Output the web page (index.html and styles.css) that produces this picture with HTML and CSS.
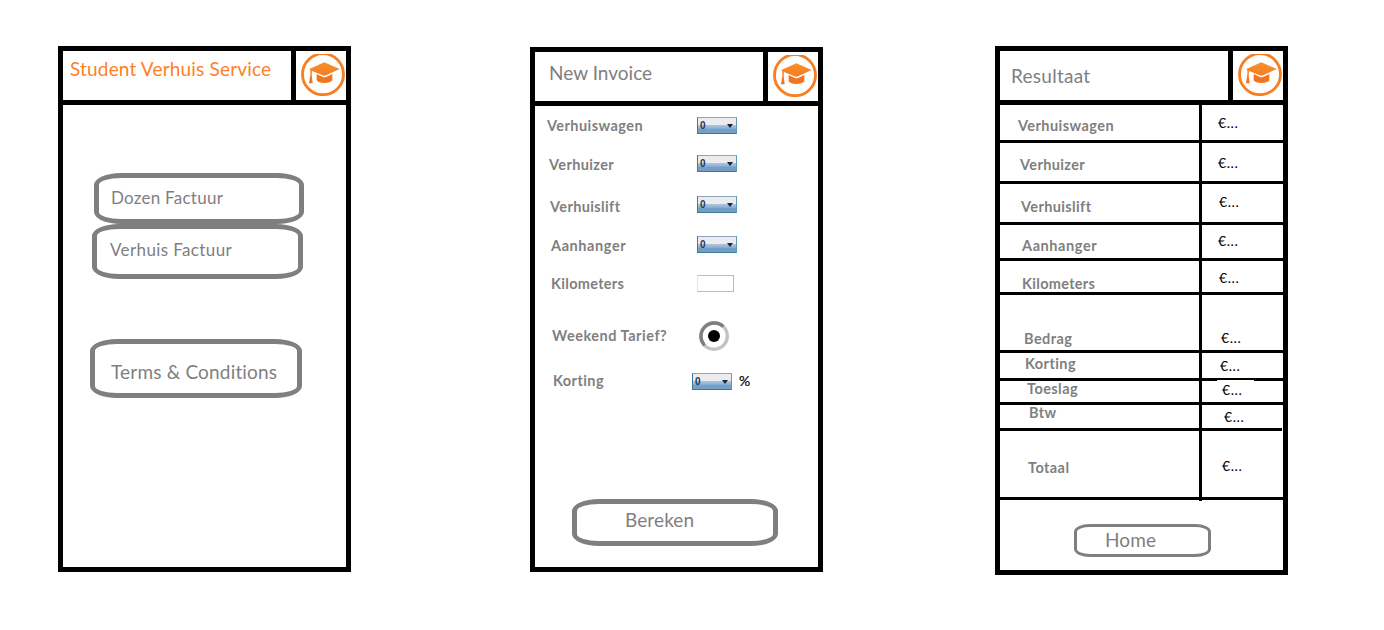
FILE: index.html
```html
<!DOCTYPE html>
<html lang="nl">
<head>
<meta charset="utf-8">
<title>Student Verhuis Service</title>
<link rel="stylesheet" href="styles.css">
</head>
<body>
<svg class="defs" width="0" height="0" aria-hidden="true">
  <defs>
    <linearGradient id="orange" x1="0" y1="0" x2="0" y2="1">
      <stop offset="0" stop-color="#f8912c"/>
      <stop offset="1" stop-color="#f4701b"/>
    </linearGradient>
    <symbol id="cap" viewBox="0 0 132 126">
      <circle cx="66" cy="60.5" r="61.5" fill="none" stroke="#f77f22" stroke-width="8.5"/>
      <path d="M70 25 L116 45 L75 64 Q70 66 65 64 L33 51 L32 62 L35 88 H24 L28 62 V49 L25 45 Z" fill="url(#orange)"/>
      <path d="M47 60 L64 68 Q70 71 77 68 L94 60 V79 Q88 87 70 87 Q53 87 47 79 Z" fill="#f4741c"/>
    </symbol>
  </defs>
</svg>
<main class="board">
  <section class="phone phone-home">
    <header class="bar">
      <h1 class="title title-brand">Student Verhuis Service</h1>
      <div class="logo"><svg class="logo-icon"><use href="#cap"/></svg></div>
    </header>
    <nav class="menu">
      <a class="btn btn-dozen"><span>Dozen Factuur</span></a>
      <a class="btn btn-verhuis"><span>Verhuis Factuur</span></a>
      <a class="btn btn-terms"><span>Terms &amp; Conditions</span></a>
    </nav>
  </section>

  <section class="phone phone-invoice">
    <header class="bar">
      <h1 class="title title-invoice">New Invoice</h1>
      <div class="logo"><svg class="logo-icon"><use href="#cap"/></svg></div>
    </header>
    <form class="form">
      <div class="field"><span class="label l-wagen">Verhuiswagen</span><span class="select">0</span></div>
      <div class="field"><span class="label l-huizer">Verhuizer</span><span class="select">0</span></div>
      <div class="field"><span class="label l-lift">Verhuislift</span><span class="select">0</span></div>
      <div class="field"><span class="label l-aanhanger">Aanhanger</span><span class="select">0</span></div>
      <div class="field"><span class="label l-km">Kilometers</span><span class="input"></span></div>
      <div class="field"><span class="label l-weekend">Weekend Tarief?</span>
        <svg class="radio" viewBox="0 0 30 30">
          <circle cx="15" cy="15" r="13.3" fill="none" stroke="#c3c3c3" stroke-width="3.4"/>
          <path d="M5.6 24.4 A13.3 13.3 0 0 1 24.4 5.6" fill="none" stroke="#7f7f7f" stroke-width="3.4"/>
          <circle cx="15" cy="15" r="6" fill="#000"/>
        </svg>
      </div>
      <div class="field"><span class="label l-korting">Korting</span><span class="select">0</span><span class="percent">%</span></div>
    </form>
    <a class="btn btn-bereken"><span>Bereken</span></a>
  </section>

  <section class="phone phone-result">
    <header class="bar">
      <h1 class="title title-result">Resultaat</h1>
      <div class="logo"><svg class="logo-icon"><use href="#cap"/></svg></div>
    </header>
    <div class="table">
      <div class="row"><div class="name"><span class="label l-wagen">Verhuiswagen</span></div><div class="value">€...</div></div>
      <div class="row"><div class="name"><span class="label l-huizer">Verhuizer</span></div><div class="value">€...</div></div>
      <div class="row"><div class="name"><span class="label l-lift">Verhuislift</span></div><div class="value">€...</div></div>
      <div class="row"><div class="name"><span class="label l-aanhanger">Aanhanger</span></div><div class="value">€...</div></div>
      <div class="row"><div class="name"><span class="label l-km">Kilometers</span></div><div class="value">€...</div></div>
      <div class="row"><div class="name"><span class="label l-bedrag">Bedrag</span></div><div class="value">€...</div></div>
      <div class="row"><div class="name"><span class="label l-korting">Korting</span></div><div class="value">€...</div></div>
      <div class="row"><div class="name"><span class="label l-toeslag">Toeslag</span></div><div class="value">€...</div></div>
      <div class="row"><div class="name"><span class="label l-btw">Btw</span></div><div class="value">€...</div></div>
      <div class="row"><div class="name"><span class="label l-totaal">Totaal</span></div><div class="value">€...</div></div>
    </div>
    <a class="btn btn-home"><span>Home</span></a>
  </section>
</main>
</body>
</html>
```
FILE: styles.css
```css
* { box-sizing: border-box; }
body { margin: 0; background: #fff; color: #7f7f7f; font-family: Lato, "Open Sans", sans-serif; overflow: hidden; }
.defs { position: absolute; }
.board { display: flex; align-items: flex-start; height: 630px; padding: 46px 0 0 58px; }

.phone { width: 293px; border: 5px solid #000; display: flex; flex-direction: column; }
.phone-home { height: 526px; }
.phone-invoice { height: 525px; margin: 1px 0 0 179px; }
.phone-result { height: 529px; margin-left: 172px; }

.bar { display: flex; flex: none; height: 54px; border-bottom: 5px solid #000; }
.title { flex: none; width: 228px; margin: 0; font-size: 19px; line-height: 20px; font-weight: 400; white-space: nowrap; }
.title-brand { color: #ff7f27; padding: 8px 0 0 7px; letter-spacing: 0.18px; }
.title-invoice { padding: 11px 0 0 14px; letter-spacing: 0.02px; }
.title-result { padding: 15px 0 0 11px; letter-spacing: 0.27px; }
.logo { width: 55px; border-left: 5px solid #000; padding: 3px 0 0 5px; }
.logo-icon { display: block; width: 44px; height: 42px; }

.btn { display: block; flex: none; border: 5px solid #7f7f7f; border-radius: 27px / 12px; font-size: 19px; line-height: 20px; white-space: nowrap; }
.menu { display: flex; flex-direction: column; }
.btn-dozen { width: 210px; height: 51px; margin: 68px 0 0 31px; padding: 10px 0 0 12px; font-size: 17px; letter-spacing: 0.25px; }
.btn-verhuis { width: 211px; height: 55px; margin-left: 29px; padding: 11px 0 0 13px; font-size: 17px; letter-spacing: 0.38px; }
.btn-terms { width: 212px; height: 59px; margin: 60px 0 0 27px; padding: 18px 0 0 16px; letter-spacing: 0.18px; }
.btn-bereken { width: 206px; height: 47px; margin-left: 37px; padding: 6px 0 0 48px; letter-spacing: 0.1px; }
.btn-home { width: 137px; height: 33px; margin: 24px 0 0 74px; padding: 3px 0 0 28px; border-width: 3px; border-radius: 16px / 8px; letter-spacing: 0.1px; }

.label { display: block; font-size: 14.5px; line-height: 18px; font-weight: 700; white-space: nowrap; letter-spacing: 0.43px; }
.l-huizer, .l-lift { letter-spacing: 0.37px; }
.l-km { letter-spacing: 0.3px; }
.l-weekend { letter-spacing: 0.52px; }
.l-aanhanger { letter-spacing: 0.58px; }

.form { flex: none; height: 393px; padding-top: 11px; }
.field { display: grid; grid-template-columns: 162px 40px 1fr; align-items: start; }
.field:nth-child(1) { height: 38px; }
.field:nth-child(2) { height: 41px; }
.field:nth-child(3) { height: 40px; }
.field:nth-child(4) { height: 39px; }
.field:nth-child(5) { height: 46px; }
.field:nth-child(6) { height: 52px; }
.field:nth-child(7) { height: 17px; grid-template-columns: 157px 40px 1fr; }
.field .label { padding-left: 16px; }
.field:nth-child(1) .label { padding-left: 12px; }
.field:nth-child(2) .label { padding: 1px 0 0 14px; }
.field:nth-child(3) .label { padding: 2px 0 0 15px; }
.field:nth-child(4) .label { padding-top: 1px; }
.field:nth-child(6) .label { padding: 6px 0 0 17px; }
.field:nth-child(7) .label { padding-left: 18px; margin-top: -1px; }

.select { position: relative; display: block; width: 40px; height: 17px; padding-left: 2px; border: 1px solid #3f7b90; border-top-color: #8ba6bd; border-right-color: #6199b4; background: linear-gradient(#ececee 0 46%, #a9c2de 50%, #8fb2d6 68%, #739fc7 75%); font: 700 10px/16px "Liberation Sans", sans-serif; color: #25384f; }
.select::after { content: ""; position: absolute; right: 3px; top: 6px; border: 3px solid transparent; border-top: 4px solid #15263d; border-bottom: 0; }
.input { display: block; width: 37px; height: 17px; border: 1px solid #a9bfd9; border-left-color: #dce7f4; background: #fff; }
.radio { display: block; width: 30px; height: 30px; margin-left: 2px; }
.percent { padding-left: 7px; color: #000; font-size: 14px; line-height: 16px; -webkit-text-stroke: 0.2px #000; }

.table { flex: none; }
.row { position: relative; display: flex; border-bottom: 3px solid #000; }
.name { width: 202px; border-right: 3px solid #000; }
.value { color: #000; font-size: 14px; line-height: 18px; letter-spacing: 0.55px; }
.row:nth-child(1) { height: 38px; }
.row:nth-child(2), .row:nth-child(3) { height: 41px; }
.row:nth-child(4) { height: 36px; }
.row:nth-child(5) { height: 34px; }
.row:nth-child(6) { height: 58px; }
.row:nth-child(7) { height: 28px; }
.row:nth-child(8) { height: 24px; }
.row:nth-child(9) { height: 26px; width: 282px; }
.row:nth-child(10) { height: 69px; }
.row:nth-child(1) .name { padding: 12px 0 0 18px; }
.row:nth-child(2) .name { padding: 13px 0 0 20px; }
.row:nth-child(3) .name { padding: 14px 0 0 21px; }
.row:nth-child(4) .name { padding: 12px 0 0 22px; }
.row:nth-child(5) .name { padding: 14px 0 0 22px; }
.row:nth-child(6) .name { padding: 35px 0 0 24px; }
.row:nth-child(7) .name { padding: 2px 0 0 25px; }
.row:nth-child(8) .name { padding-left: 27px; }
.row:nth-child(9) .name { padding-left: 29px; }
.row:nth-child(10) .name { padding: 28px 0 0 28px; }
.l-toeslag, .l-btw { margin-top: -1px; }
.row:nth-child(1) .value { padding: 9px 0 0 16px; }
.row:nth-child(2) .value { padding: 11px 0 0 16px; }
.row:nth-child(3) .value { padding: 9px 0 0 17px; }
.row:nth-child(4) .value { padding: 7px 0 0 16px; }
.row:nth-child(5) .value { padding: 8px 0 0 17px; }
.row:nth-child(6) .value { padding: 34px 0 0 19px; }
.row:nth-child(7) .value { padding: 4px 0 0 18px; }
.row:nth-child(8) .value { padding: 0 0 0 20px; }
.row:nth-child(9) .value { padding: 3px 0 0 22px; }
.row:nth-child(10) .value { padding: 26px 0 0 20px; }
/* gap in the rule above the surcharge amount, and the end of the column rule */
.row:nth-child(7)::after { content: ""; position: absolute; left: 217px; bottom: -3px; width: 37px; height: 1px; background: #fff; }
.row:nth-child(10)::after { content: ""; position: absolute; left: 199px; bottom: -4px; width: 3px; height: 1px; background: #000; }
```
